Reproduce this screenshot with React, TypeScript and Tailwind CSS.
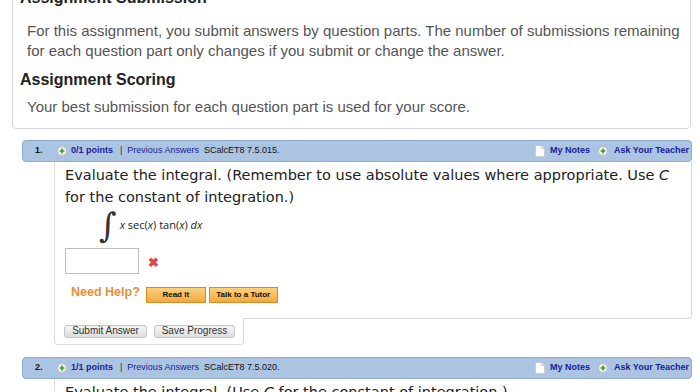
import React from "react";

function PlusIcon() {
  return (
    <svg width="10" height="10" viewBox="0 0 10 10" className="shrink-0">
      <circle cx="5" cy="5" r="4.5" fill="#f4f4f4" stroke="#b8b8b8" strokeWidth="0.8" />
      <path d="M5 2.6v4.8M2.6 5h4.8" stroke="#2e9a2e" strokeWidth="1.6" />
    </svg>
  );
}

function NoteIcon() {
  return (
    <svg width="10" height="12" viewBox="0 0 10 12" className="shrink-0">
      <path d="M0.5 0.5h6l3 3v8h-9z" fill="#ffffff" stroke="#c8c8c8" strokeWidth="0.8" />
      <path d="M6.5 0.5v3h3" fill="#eeeeee" stroke="#c8c8c8" strokeWidth="0.8" />
    </svg>
  );
}

function QuestionHeader({ num, points, code }: { num: string; points: string; code: string }) {
  return (
    <div className="flex h-[22px] items-center rounded-[4px] border border-[#8faacb] bg-[#aac4e2] pl-[12px] pr-[2px] text-[9px] font-['Liberation_Sans',Arial,sans-serif]">
      <span className="w-[22px] font-bold text-[#111]">{num}</span>
      <PlusIcon />
      <span className="ml-[4px] font-bold text-[#1b1b9a]">{points}</span>
      <span className="ml-[7px] text-[#333]">|</span>
      <span className="ml-[5px] text-[#1b1b9a]">Previous Answers</span>
      <span className="ml-[5px] text-[#111]">{code}</span>
      <div className="ml-auto flex items-center">
        <NoteIcon />
        <span className="ml-[5px] font-bold text-[#1b1b9a]">My Notes</span>
        <span className="ml-[8px]">
          <PlusIcon />
        </span>
        <span className="ml-[6px] font-bold text-[#1b1b9a]">Ask Your Teacher</span>
      </div>
    </div>
  );
}

function OrangeButton({ label, width }: { label: string; width: string }) {
  return (
    <button
      className={`h-[16px] ${width} border border-[#d88a24] bg-gradient-to-b from-[#fbd27a] to-[#f2a93c] text-[8px] font-bold text-[#111] leading-none`}
    >
      {label}
    </button>
  );
}

function GrayButton({ label, width }: { label: string; width: string }) {
  return (
    <button
      className={`h-[13px] ${width} rounded-[3px] border border-[#c4c4c4] bg-gradient-to-b from-[#f6f6f6] to-[#dedede] text-[10px] text-[#333] leading-none`}
    >
      {label}
    </button>
  );
}

export default function App() {
  return (
    <div className="h-[392px] w-[700px] overflow-hidden bg-white font-['Liberation_Sans',Arial,sans-serif]">
      {/* Assignment info box */}
      <div className="ml-[12px] mr-[9px] -mt-[13px] rounded-b-[4px] border border-[#d6dbe2] pb-[11px]">
        <h2 className="pl-[7px] text-[16px] font-bold leading-[20px] text-[#222]">Assignment Submission</h2>
        <p className="mt-[13px] pl-[14px] text-[15px] leading-[20px] text-[#555]">
          For this assignment, you submit answers by question parts. The number of submissions remaining
          <br />
          for each question part only changes if you submit or change the answer.
        </p>
        <h2 className="mt-[9px] pl-[7px] text-[16px] font-bold leading-[20px] text-[#222]">Assignment Scoring</h2>
        <p className="mt-[7px] pl-[14px] text-[15px] leading-[20px] text-[#555]">
          Your best submission for each question part is used for your score.
        </p>
      </div>

      {/* Question 1 */}
      <div className="ml-[22px] mr-[8px] mt-[11px]">
        <QuestionHeader num="1." points="0/1 points" code="SCalcET8 7.5.015." />
        <div className="ml-[32px]">
          <div className="rounded-br-[4px] border-x border-b border-[#dcdcdc] pb-[16px] pl-[10px] pt-[2px]">
            <p className="font-['DejaVu_Sans',sans-serif] text-[14.5px] leading-[22px] text-[#222]">
              Evaluate the integral. (Remember to use absolute values where appropriate. Use <i>C</i>
              <br />
              for the constant of integration.)
            </p>
            <div className="ml-[34px] flex h-[34px] items-center">
              <span className="font-['DejaVu_Serif',serif] text-[34px] leading-none text-[#333]">∫</span>
              <span className="ml-[3px] font-['Open_Sans',sans-serif] text-[11px] text-[#222]">
                <i>x</i> sec(<i>x</i>) tan(<i>x</i>) <i>dx</i>
              </span>
            </div>
            <div className="mt-[6px] flex items-center">
              <div className="h-[26px] w-[74px] border border-[#bdbdbd]" />
              <span className="ml-[9px] mt-[3px] text-[13px] font-bold leading-none text-[#e2474d]">✖</span>
            </div>
            <div className="mt-[8px] flex h-[20px] items-center">
              <span className="ml-[6px] text-[12.5px] font-bold text-[#e4913a]">Need Help?</span>
              <span className="ml-[6px]">
                <OrangeButton label="Read It" width="w-[60px]" />
              </span>
              <span className="ml-[3px]">
                <OrangeButton label="Talk to a Tutor" width="w-[69px]" />
              </span>
            </div>
          </div>
          <div className="relative -mt-px flex h-[27px] w-[190px] items-center gap-[7px] rounded-b-[4px] border-x border-b border-[#dcdcdc] bg-white pl-[9px]">
            <GrayButton label="Submit Answer" width="w-[83px]" />
            <GrayButton label="Save Progress" width="w-[81px]" />
          </div>
        </div>
      </div>

      {/* Question 2 */}
      <div className="ml-[22px] mr-[8px] mt-[12px]">
        <QuestionHeader num="2." points="1/1 points" code="SCalcET8 7.5.020." />
        <div className="ml-[32px] border-l border-[#dcdcdc] pl-[10px] pt-[2px]">
          <p className="font-['DejaVu_Sans',sans-serif] text-[14.5px] leading-[22px] text-[#222]">
            Evaluate the integral. (Use <i>C</i> for the constant of integration.)
          </p>
        </div>
      </div>
    </div>
  );
}
